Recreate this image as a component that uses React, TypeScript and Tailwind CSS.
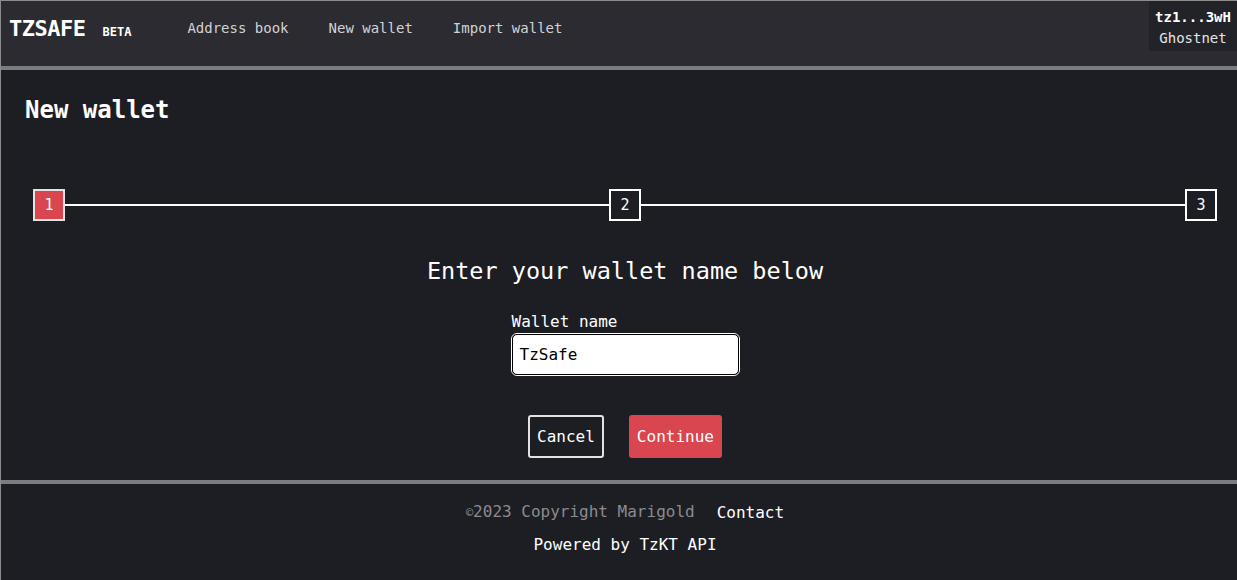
import React from "react";

const mono = { fontFamily: '"DejaVu Sans Mono", "Liberation Mono", monospace' };

function Step({ n, active }: { n: number; active?: boolean }) {
  return (
    <div
      className={
        "w-8 h-8 shrink-0 flex items-center justify-center border-2 text-[15px] text-white leading-none " +
        (active ? "bg-[#d9464f] border-[#e4e4e4]" : "border-white bg-transparent")
      }
    >
      {n}
    </div>
  );
}

export default function App() {
  return (
    <div
      style={mono}
      className="w-full h-[580px] flex flex-col border-t border-l border-[#8c8c8c] bg-[#1d1e23] text-white overflow-hidden"
    >
      {/* Header */}
      <header className="h-[65px] shrink-0 bg-[#2b2b31] flex items-start justify-between">
        <div className="flex items-center h-[54px] pl-[8px]">
          <div className="flex items-baseline">
            <span className="text-[22px] font-bold tracking-[-0.5px] text-white">TZSAFE</span>
            <span className="ml-[17px] text-[12px] font-bold text-white">BETA</span>
          </div>
          <nav className="flex items-center gap-[40px] ml-[56px] text-[14px] text-[#d2d2d6]">
            <span>Address book</span>
            <span>New wallet</span>
            <span>Import wallet</span>
          </nav>
        </div>
        <div className="bg-[#222328] h-[50px] w-[88px] flex flex-col items-center pt-[6px] text-[14px] leading-[21px]">
          <span className="font-bold text-white">tz1...3wH</span>
          <span className="text-[#e4e4e6]">Ghostnet</span>
        </div>
      </header>
      <div className="h-1 shrink-0 bg-[#7b7c82]" />

      {/* Main */}
      <main className="h-[410px] shrink-0 flex flex-col">
        <h1 className="pt-6 pl-6 text-[24px] leading-[32px] font-bold">New wallet</h1>

        <div className="mt-[63px] ml-[32px] mr-[20px] flex items-center">
          <Step n={1} active />
          <div className="flex-1 h-[2px] bg-white" />
          <Step n={2} />
          <div className="flex-1 h-[2px] bg-white" />
          <Step n={3} />
        </div>

        <div className="pl-3 flex flex-col items-center">
          <h2 className="mt-[34px] text-center text-[23.5px] leading-[32px]">
            Enter your wallet name below
          </h2>

          <div className="mt-[25px] flex flex-col w-[229px]">
            <label className="text-[16px] leading-[20px] pl-[1px]">Wallet name</label>
            <div className="mt-[1px] h-[43px] rounded-[6px] border border-white">
              <div className="h-full rounded-[5px] border-[1.5px] border-black bg-white flex items-center px-[7px] text-[16px] text-black">
                TzSafe
              </div>
            </div>
          </div>

          <div className="mt-[39px] flex justify-center gap-[25px]">
            <button className="h-[43px] px-[7px] border-2 border-[#e2e2e2] rounded-[3px] text-[16px] text-white bg-transparent">
              Cancel
            </button>
            <button className="h-[43px] px-[8px] rounded-[3px] bg-[#d9464f] text-[16px] text-white">
              Continue
            </button>
          </div>
        </div>
      </main>
      <div className="h-1 shrink-0 bg-[#7b7c82]" />

      {/* Footer */}
      <footer className="flex-1 flex flex-col items-center pl-3 pt-4 gap-2 text-[16px] leading-[24px]">
        <div className="flex items-center gap-[22px]">
          <span className="text-[#8b8b90]">
            <span className="text-[12px]">©</span>2023 Copyright Marigold
          </span>
          <span className="text-white">Contact</span>
        </div>
        <div className="text-white">Powered by TzKT API</div>
      </footer>
    </div>
  );
}
